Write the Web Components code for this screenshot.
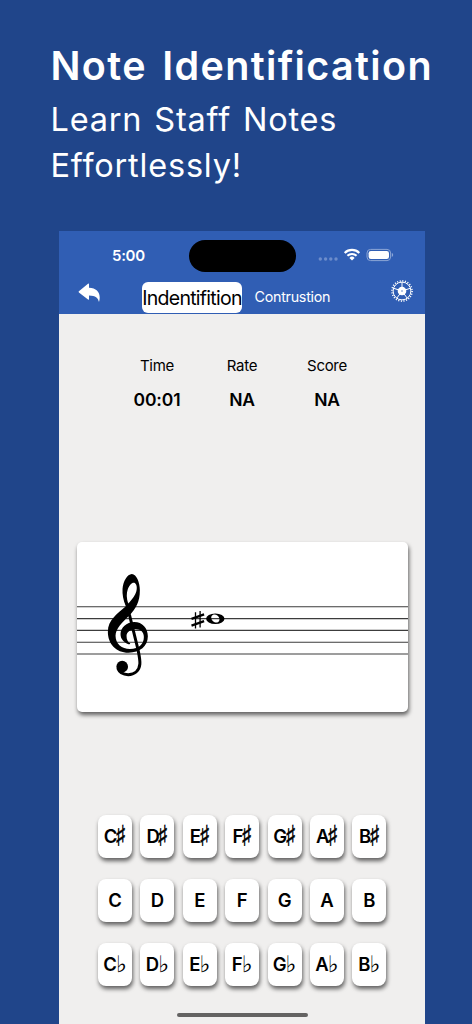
<!DOCTYPE html>
<html lang="en">
<head>
<meta charset="utf-8">
<title>Note Identification</title>
<style>
    body {
        margin: 0;
        width: 472px;
        height: 1024px;
        overflow: hidden;
        background: #20458a;
        font-family: Inter, "Liberation Sans", sans-serif;
    }
</style>
</head>
<body>
<note-promo>
    <span slot="title">Note Identification</span>
    <span slot="subtitle">Learn Staff Notes<br>Effortlessly!</span>
    <phone-screen>
        <status-bar slot="header" time="5:00"></status-bar>
        <nav-bar slot="header">
            <span slot="active">Indentifition</span>
            <span slot="other">Contrustion</span>
        </nav-bar>
        <score-board>
            <score-item label="Time">00:01</score-item>
            <score-item label="Rate">NA</score-item>
            <score-item label="Score">NA</score-item>
        </score-board>
        <staff-card></staff-card>
        <note-keyboard></note-keyboard>
        <home-indicator></home-indicator>
    </phone-screen>
</note-promo>

<template id="note-promo-template">
    <style>
        :host {
            display: flex;
            flex-direction: column;
            height: 1024px;
            box-sizing: border-box;
            padding-top: 43px;
        }
        .copy {
            height: 188px;
            padding-left: 50.5px;
            color: #fff;
            white-space: nowrap;
        }
        h1 {
            margin: 0;
            font-size: 39.5px;
            font-weight: 600;
            line-height: 46px;
            letter-spacing: 1.35px;
            word-spacing: 4px;
        }
        p {
            margin: 8px 0 0;
            font-size: 32.5px;
            line-height: 46px;
            letter-spacing: .8px;
            word-spacing: 2px;
        }
    </style>
    <div class="copy">
        <h1><slot name="title"></slot></h1>
        <p><slot name="subtitle"></slot></p>
    </div>
    <slot></slot>
</template>

<template id="phone-screen-template">
    <style>
        :host {
            display: flex;
            flex-direction: column;
            width: 366px;
            height: 793px;
            margin-left: 59px;
            background: #f0efee;
            color: #000;
        }
        header {
            height: 83px;
            background: #305eb4;
            color: #fff;
        }
    </style>
    <header><slot name="header"></slot></header>
    <slot></slot>
</template>

<template id="status-bar-template">
    <style>
        :host {
            display: grid;
            grid-template-columns: 130px 107px 129px;
            align-items: center;
            height: 50px;
        }
        .time {
            padding: 0 0 2px 53px;
            font-size: 15px;
            font-weight: 600;
            letter-spacing: -.3px;
        }
        .island {
            height: 32px;
            border-radius: 16px;
            background: #000;
        }
        .icons {
            display: flex;
            align-items: center;
            padding: 0 0 2px 22px;
        }
        svg {
            display: block;
        }
    </style>
    <div class="time"></div>
    <div class="island"></div>
    <div class="icons">
        <svg width="76" height="14" viewBox="0 0 76 14">
            <g fill="#6d8dcb">
                <circle cx="2.3" cy="11" r="1.7"/>
                <circle cx="7.6" cy="11" r="1.7"/>
                <circle cx="12.8" cy="11" r="1.7"/>
                <circle cx="18" cy="11" r="1.7"/>
            </g>
            <g fill="none" stroke="#fff" stroke-width="2.1">
                <path d="M26.7 4.9a10.4 10.4 0 0 1 14.6 0"/>
                <path d="M29.4 7.8a6.6 6.6 0 0 1 9.2 0"/>
            </g>
            <path fill="#fff" d="M34 12.6l-2.6-2.7a3.7 3.7 0 0 1 5.2 0z"/>
            <rect x="49" y="1.4" width="23.6" height="11.2" rx="3.6" fill="none" stroke="#8ba5d6"/>
            <rect x="50.6" y="2.9" width="20.4" height="8.2" rx="2.3" fill="#fff"/>
            <path fill="#8ba5d6" d="M73.8 5.1c1.8.6 1.8 3.2 0 3.8z"/>
        </svg>
    </div>
</template>

<template id="nav-bar-template">
    <style>
        :host {
            display: grid;
            grid-template-columns: 83px 100px 104px 79px;
            height: 33px;
        }
        .back {
            padding: 2px 0 0 19px;
        }
        .active {
            height: 31px;
            border-radius: 6px;
            background: #fff;
            color: #000;
            font-size: 19.5px;
            line-height: 32px;
            text-align: center;
            letter-spacing: -.72px;
            white-space: nowrap;
            margin-top: .5px;
        }
        .other {
            padding-left: 12.5px;
            font-size: 14.3px;
            line-height: 32px;
            letter-spacing: -.27px;
        }
        .gear {
            padding-left: 42.5px;
            margin-top: -3px;
        }
        svg {
            display: block;
        }
    </style>
    <div class="back">
        <svg width="23" height="20" viewBox="0 0 23 20">
            <path fill="#fff" d="M.9 8.2L10 .7q1-.6 1 .6v3.5c7 .2 10.7 4 10.7 9.5 0 2-.3 3.7-.7 4.8-.9-4.400-3.300-6.600-10-6.700v3.600q0 1.200-1 .5L.9 9.400Q.2 8.800.9 8.200z"/>
        </svg>
    </div>
    <div class="active"><slot name="active"></slot></div>
    <div class="other"><slot name="other"></slot></div>
    <div class="gear">
        <svg width="26" height="26" viewBox="-13 -13 26 26">
            <circle r="8.9" fill="none" stroke="#fff" stroke-width="1"/>
            <circle r="10.1" fill="none" stroke="#fff" stroke-width="1.6" stroke-dasharray="1.1 1.544"/>
            <path stroke="#fff" stroke-width="1" d="M0 0V-9M0 0L8.6-2.8M0 0L5.3 7.3M0 0L-5.3 7.3M0 0L-8.6-2.8"/>
            <circle r="4.3" fill="#fff"/>
            <circle r=".7" fill="#305eb4"/>
        </svg>
    </div>
</template>

<template id="score-board-template">
    <style>
        :host {
            display: grid;
            grid-template-columns: repeat(3, 85px);
            justify-content: center;
            height: 228px;
            padding-top: 41.5px;
            box-sizing: border-box;
        }
    </style>
    <slot></slot>
</template>

<template id="score-item-template">
    <style>
        :host {
            display: block;
            text-align: center;
        }
        .label {
            font-size: 15px;
            line-height: 20px;
            letter-spacing: -.3px;
        }
        .value {
            margin-top: 13px;
            font-size: 17.5px;
            line-height: 22px;
            font-weight: 600;
            letter-spacing: -.15px;
        }
    </style>
    <div class="label"></div>
    <div class="value"><slot></slot></div>
</template>

<template id="staff-card-template">
    <style>
        :host {
            display: block;
            width: 331px;
            height: 170px;
            margin: 0 0 0 17.5px;
            border-radius: 5px;
            background: #fff;
            box-shadow: 1px 3px 4px rgba(0, 0, 0, .6);
        }
        svg {
            display: block;
        }
    </style>
    <svg width="331" height="170" viewBox="76.5 542 331 170">
        <path stroke="#3c3c3c" stroke-width="1.1" d="M76 606.7H408M76 618.6H408M76 630.4H408M76 642.3H408M76 654H408"/>
        <!-- treble clef -->
        <g transform="translate(94.7 565) scale(.3333)">
            <path fill-rule="evenodd" d="M92 124C84 105 81 88 82 72C84 48 96 28 110 27C124 28 134 52 134 76C134 112 122 130 104 150C80 173 62 190 61 212C61 236 80 252 104 252C132 252 146 236 146 216C146 202 137 193 122 193C106 193 95 201 94 212C94 224 98 231 105 235C105 238 102 239 98 237C85 231 76 222 76 207C76 188 94 171 117 171C142 171 158 190 158 214C158 244 134 263 100 263C62 263 38 236 38 200C38 166 66 146 92 124ZM99 116C94 100 93 86 98 72C103 59 112 50 119 54C127 60 126 76 120 88C114 99 107 108 99 116Z"/>
            <path fill="none" stroke="#000" stroke-width="9" d="M95 114C99 130 101 140 103 150L128 252C131 268 135 283 134 297C132 318 117 329 99 329C82 329 72 321 68 310"/>
            <circle cx="81" cy="305" r="17.5"/>
        </g>
        <!-- sharp and whole note -->
        <path fill="none" stroke="#000" stroke-width="1.3" d="M195 612.2V628.6M199.6 611V627.4"/>
        <path fill="none" stroke="#000" stroke-width="2.3" d="M191 618.8L203.6 614.4M191 625.6L203.6 621.2"/>
        <path fill-rule="evenodd" d="M205.6 618.7a9.2 5.2 0 1 0 18.4 0a9.2 5.2 0 1 0-18.4 0zM211 616.3c1-2 4-2.3 5.9-.7 1.9 1.6 2.7 4.1 1.6 5.7-1.2 1.7-4.2 1.6-6-.1-1.6-1.5-2.2-3.4-1.5-4.9z"/>
    </svg>
</template>

<template id="note-keyboard-template">
    <style>
        :host {
            display: grid;
            grid-template-columns: repeat(7, 34px);
            grid-auto-rows: 43px;
            column-gap: 8.4px;
            row-gap: 21px;
            margin: 103px 0 0 39px;
        }
    </style>
</template>

<template id="note-key-template">
    <style>
        :host {
            display: flex;
            align-items: center;
            justify-content: center;
            border-radius: 8px;
            background: #fff;
            box-shadow: 1px 3px 4px rgba(0, 0, 0, .6);
            font-size: 18.5px;
            font-weight: 600;
            line-height: 43.5px;
        }
        .accidental {
            font-family: "DejaVu Sans", sans-serif;
            font-weight: 400;
        }
        .sharp {
            font-size: 23px;
            margin-left: -2.5px;
            transform: scale(1.1, 1.2) skewY(-9deg);
            -webkit-text-stroke: .4px #000;
        }
        .flat {
            font-size: 23px;
            margin-left: -1px;
        }
    </style>
    <span class="letter"></span><span class="accidental"></span>
</template>

<template id="home-indicator-template">
    <style>
        :host {
            display: block;
            width: 131px;
            height: 4px;
            margin: 26.5px 0 0 117.5px;
            border-radius: 2px;
            background: #646362;
        }
    </style>
</template>

<script>
    class BaseElement extends HTMLElement {
        constructor() {
            super();
            const template = document.querySelector(`#${this.localName}-template`);
            this.attachShadow({mode: 'open'});
            this.shadowRoot.appendChild(template.content.cloneNode(true));
        }
    }

    class StatusBar extends BaseElement {
        connectedCallback() {
            this.shadowRoot.querySelector('.time').textContent = this.getAttribute('time');
        }
    }

    class ScoreItem extends BaseElement {
        connectedCallback() {
            this.shadowRoot.querySelector('.label').textContent = this.getAttribute('label');
        }
    }

    class NoteKey extends BaseElement {
        connectedCallback() {
            const accidental = this.getAttribute('accidental');
            this.shadowRoot.querySelector('.letter').textContent = this.getAttribute('letter');

            const $accidental = this.shadowRoot.querySelector('.accidental');
            if (accidental) {
                $accidental.textContent = accidental;
                $accidental.classList.add(accidental === '♯' ? 'sharp' : 'flat');
            } else {
                $accidental.remove();
            }
        }
    }

    class NoteKeyboard extends BaseElement {
        connectedCallback() {
            for (const accidental of ['♯', '', '♭']) {
                for (const letter of 'CDEFGAB') {
                    const key = document.createElement('note-key');
                    key.setAttribute('letter', letter);
                    key.setAttribute('accidental', accidental);
                    this.shadowRoot.appendChild(key);
                }
            }
        }
    }

    customElements.define('note-promo', class extends BaseElement {});
    customElements.define('phone-screen', class extends BaseElement {});
    customElements.define('status-bar', StatusBar);
    customElements.define('nav-bar', class extends BaseElement {});
    customElements.define('score-board', class extends BaseElement {});
    customElements.define('score-item', ScoreItem);
    customElements.define('staff-card', class extends BaseElement {});
    customElements.define('note-key', NoteKey);
    customElements.define('note-keyboard', NoteKeyboard);
    customElements.define('home-indicator', class extends BaseElement {});
</script>
</body>
</html>
